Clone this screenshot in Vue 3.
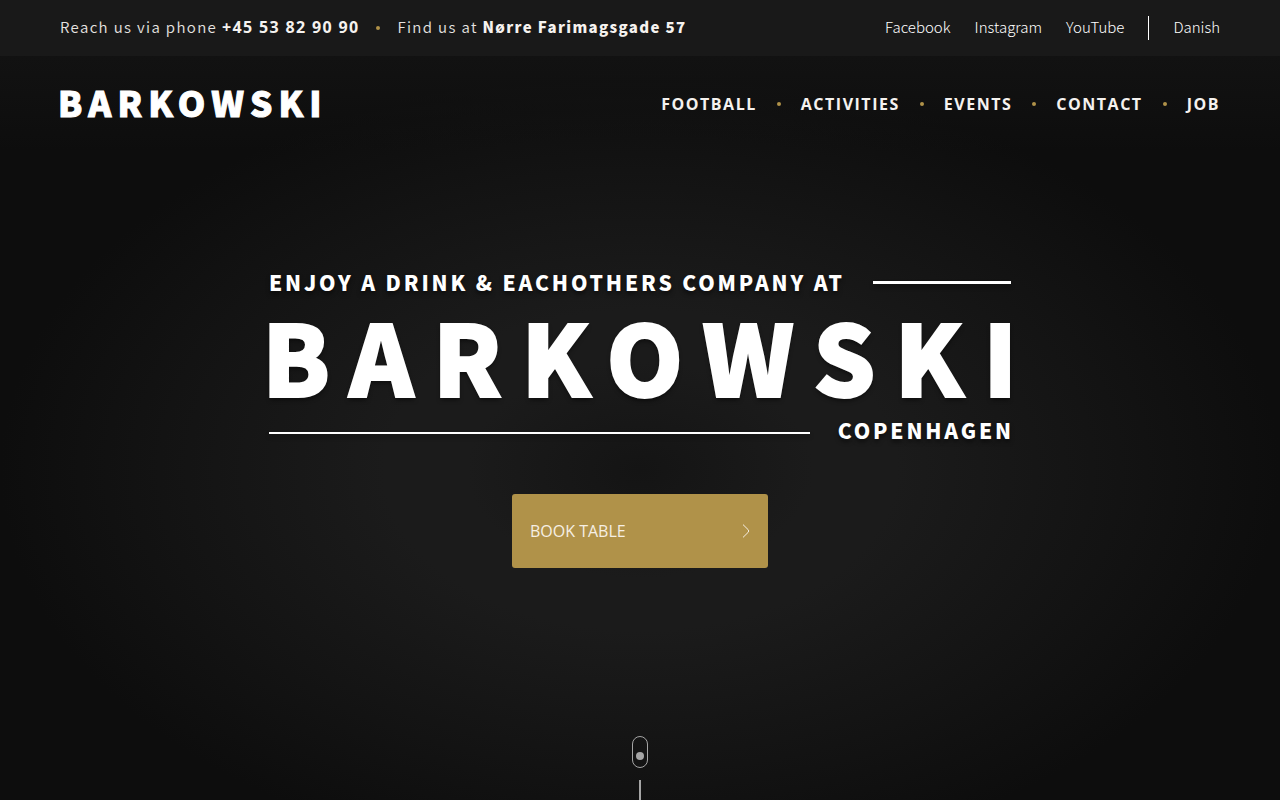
<script setup>
const social = ['Facebook', 'Instagram', 'YouTube']
const menu = ['Football', 'Activities', 'Events', 'Contact', 'Job']
</script>

<template>
  <div class="page">
    <header class="header">
      <div class="topbar">
        <div class="contact">
          <span class="info">Reach us via phone <a class="phone" href="#phone">+45 53 82 90 90</a></span>
          <i class="dot" aria-hidden="true"></i>
          <span class="info">Find us at <a class="address" href="#map">Nørre Farimagsgade 57</a></span>
        </div>
        <nav class="social" aria-label="Social">
          <a v-for="name in social" :key="name" href="#social">{{ name }}</a>
          <i class="divider" aria-hidden="true"></i>
          <a href="#danish">Danish</a>
        </nav>
      </div>
      <div class="mainbar">
        <a class="logo" href="#home">BARKOWSKI</a>
        <nav class="menu" aria-label="Main">
          <template v-for="(item, i) in menu" :key="item">
            <i v-if="i > 0" class="dot" aria-hidden="true"></i>
            <a href="#menu">{{ item }}</a>
          </template>
        </nav>
      </div>
    </header>

    <main class="hero">
      <div class="lockup">
        <div class="row">
          <p class="tagline">ENJOY A DRINK &amp; EACHOTHERS COMPANY AT</p>
          <i class="rule" aria-hidden="true"></i>
        </div>
        <h1 class="wordmark">BARKOWSKI</h1>
        <div class="row">
          <i class="rule rule-city" aria-hidden="true"></i>
          <p class="tagline city">COPENHAGEN</p>
        </div>
      </div>
      <a class="book" href="#book">
        <span>BOOK TABLE</span>
        <svg width="8" height="14" viewBox="0 0 8 14" fill="none" stroke="#f6efe4" stroke-width="1" aria-hidden="true">
          <path d="M1 .6 6.1 5.6Q7.4 7 6.1 8.4L1 13.4" />
        </svg>
      </a>
    </main>

    <div class="scroll" aria-hidden="true">
      <span class="mouse"><i></i></span>
      <span class="stem"></span>
    </div>
  </div>
</template>

<style>
body {
  background: #0c0c0c;
}
</style>

<style scoped>
.page {
  min-height: 100vh;
  display: flex;
  flex-direction: column;
  box-sizing: border-box;
  overflow: hidden;
  color: #f5f2ef;
  font-family: "Noto Sans CJK SC", "Noto Sans", sans-serif;
  background: radial-gradient(ellipse 640px 400px at 50% 470px, #141414 0%, #1b1b1b 27%, #1b1b1b 40%, #131313 75%, #0d0d0d 100%);
}
a {
  color: inherit;
  text-decoration: none;
}
.header {
  background: linear-gradient(#121212 56px, rgba(15, 15, 15, 0) 152px);
}
.topbar,
.mainbar {
  display: flex;
  align-items: center;
  justify-content: space-between;
  padding: 0 60px;
}
.topbar {
  height: 56px;
  background: #191919;
}
.mainbar {
  height: 96px;
}
.contact,
.social,
.menu {
  display: flex;
  align-items: center;
}
.contact {
  gap: 17px;
}
.info,
.social {
  font-size: 15px;
  font-weight: 350;
  line-height: 24px;
  color: #e6e3e0;
}
.info {
  padding-bottom: 2px;
  letter-spacing: 0.09em;
}
.phone {
  font-family: "Open Sans", sans-serif;
  font-size: 16px;
  font-weight: 700;
  color: #f5f2ef;
}
.address {
  font-weight: 900;
  color: #f5f2ef;
}
.social {
  gap: 24px;
  font-weight: 300;
  color: #fff;
}
.social a {
  padding-bottom: 2px;
}
.divider {
  width: 1px;
  height: 24px;
  background: #fff;
}
.dot {
  width: 4px;
  height: 4px;
  border-radius: 50%;
  background: #b09249;
}
.logo {
  margin-left: -2px;
  padding-bottom: 4px;
  font-size: 35px;
  font-weight: 900;
  line-height: 48px;
  letter-spacing: 6px;
  color: #fff;
  -webkit-text-stroke: 1px #fff;
}
.menu {
  gap: 20px;
  font-family: "Open Sans", sans-serif;
  font-size: 16px;
  font-weight: 700;
  line-height: 24px;
  letter-spacing: 0.095em;
  text-transform: uppercase;
}
.hero {
  flex: 1;
  display: flex;
  flex-direction: column;
  align-items: center;
  padding: 116px 20px 0;
}
.lockup {
  width: 100%;
  max-width: 742px;
  color: #fff;
}
.row {
  display: flex;
  align-items: center;
  gap: 28px;
}
.tagline {
  margin: 0;
  font-size: 21px;
  font-weight: 900;
  line-height: 28px;
  letter-spacing: 0.135em;
  text-shadow: 0 3px 4px rgba(0, 0, 0, 0.5);
}
.city {
  margin-right: -3px;
}
.rule {
  flex: 1;
  height: 3px;
  background: #fff;
  box-shadow: 0 3px 4px rgba(0, 0, 0, 0.3);
}
.rule-city {
  height: 2px;
  margin-top: 6px;
}
.wordmark {
  margin: 10px -24px 14px -7px;
  font-size: 98px;
  font-weight: 900;
  line-height: 96px;
  letter-spacing: 19px;
  white-space: nowrap;
  -webkit-text-stroke: 2px #fff;
  text-shadow: 0 3px 4px rgba(0, 0, 0, 0.5);
}
.book {
  display: flex;
  align-items: center;
  justify-content: space-between;
  box-sizing: border-box;
  width: 256px;
  margin-top: 50px;
  padding: 25px 18px;
  border-radius: 3px;
  background: #b09249;
  color: #f6efe4;
  font-family: "Open Sans", sans-serif;
  font-size: 16px;
  font-weight: 400;
  line-height: 24px;
}
.scroll {
  display: flex;
  flex-direction: column;
  align-items: center;
  gap: 12px;
}
.mouse {
  display: flex;
  justify-content: center;
  align-items: flex-end;
  box-sizing: border-box;
  width: 16px;
  height: 32px;
  padding-bottom: 7px;
  border: 1px solid #a5a5a5;
  border-radius: 8px;
}
.mouse i {
  width: 8px;
  height: 8px;
  border-radius: 50%;
  background: #a5a5a5;
}
.stem {
  width: 2px;
  height: 20px;
  background: #a5a5a5;
}
</style>
